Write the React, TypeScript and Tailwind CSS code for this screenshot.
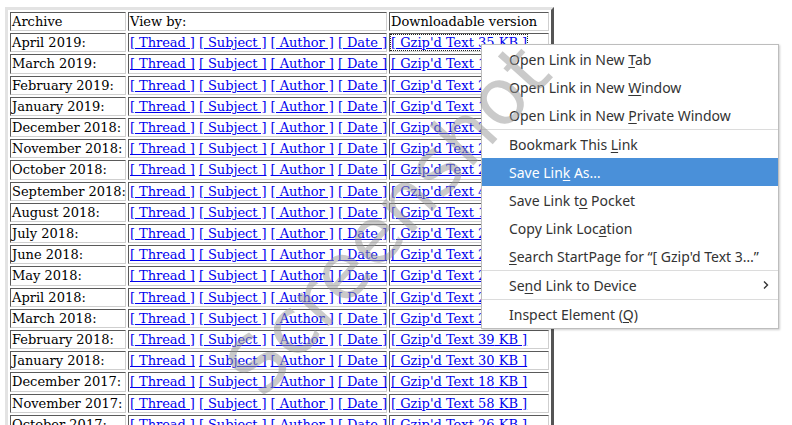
import React from "react";

const rows: [string, string][] = [
  ["April 2019:", "35"],
  ["March 2019:", "19"],
  ["February 2019:", "24"],
  ["January 2019:", "17"],
  ["December 2018:", "21"],
  ["November 2018:", "26"],
  ["October 2018:", "22"],
  ["September 2018:", "41"],
  ["August 2018:", "18"],
  ["July 2018:", "27"],
  ["June 2018:", "25"],
  ["May 2018:", "23"],
  ["April 2018:", "29"],
  ["March 2018:", "28"],
  ["February 2018:", "39"],
  ["January 2018:", "30"],
  ["December 2017:", "18"],
  ["November 2017:", "58"],
  ["October 2017:", "26"],
];

const cell =
  "border border-solid border-t-[#5a5a5a] border-l-[#5a5a5a] border-r-[#cfcfcf] border-b-[#cfcfcf] p-[1px] text-left font-normal align-middle whitespace-nowrap overflow-visible";

function L({ children, focus }: { children: React.ReactNode; focus?: boolean }) {
  return (
    <a
      href="#"
      className={
        focus
          ? "text-[#0000ee] underline outline-1 outline-dotted outline-[#222]"
          : "text-[#0000ee] underline"
      }
    >
      {children}
    </a>
  );
}

function U({ children }: { children: React.ReactNode }) {
  return <span className="underline underline-offset-2">{children}</span>;
}

function Item({
  children,
  active,
  arrow,
}: {
  children: React.ReactNode;
  active?: boolean;
  arrow?: boolean;
}) {
  return (
    <div
      className={
        active
          ? "h-[28px] flex items-center pl-[27px] pr-[10px] bg-[#4a90d9] text-white"
          : "h-[28px] flex items-center pl-[27px] pr-[10px] text-[#333333]"
      }
    >
      <span className="flex-1">{children}</span>
      {arrow && (
        <svg width="8" height="10" viewBox="0 0 8 10" className="mr-[-2px]">
          <path d="M2 1.5 L5.5 5 L2 8.5" fill="none" stroke="#333" strokeWidth="1.4" />
        </svg>
      )}
    </div>
  );
}

function Sep() {
  return <div className="h-px bg-[#dcdcdc]" />;
}

export default function App() {
  return (
    <div className="relative w-[792px] h-[425px] overflow-hidden bg-white">
      <div className="pl-[5px] pt-[7px]">
        <table
          className="table-fixed w-[549px] border-[3px] border-solid border-t-[#e3e3e3] border-l-[#e3e3e3] border-r-[#555] border-b-[#555] border-separate border-spacing-[2px] text-[13px] leading-[15.2px] text-black"
          style={{ fontFamily: '"DejaVu Serif", serif' }}
        >
          <colgroup>
            <col className="w-[116px]" />
            <col className="w-[259px]" />
            <col className="w-[160px]" />
          </colgroup>
          <tbody>
            <tr>
              <td className={cell}>Archive</td>
              <td className={cell}>View by:</td>
              <td className={cell}>Downloadable version</td>
            </tr>
            {rows.map(([m, kb], i) => (
              <tr key={i}>
                <td className={cell}>{m}</td>
                <td className={cell + " tracking-[-0.06px]"}>
                  <L>[ Thread ]</L> <L>[ Subject ]</L> <L>[ Author ]</L> <L>[ Date ]</L>
                </td>
                <td className={cell}>
                  <L focus={i === 0}>[ Gzip'd Text {kb} KB ]</L>
                </td>
              </tr>
            ))}
          </tbody>
        </table>
      </div>

      {/* watermark */}
      <div
        className="absolute left-[388px] top-[220px] pointer-events-none z-20"
        style={{ transform: "translate(-50%, -50%) rotate(-48deg)" }}
      >
        <div
          className="text-[78px] leading-none text-[rgba(150,150,150,0.5)] whitespace-nowrap"
          style={{ fontFamily: '"DejaVu Sans", sans-serif' }}
        >
          Screenshot
        </div>
      </div>

      {/* context menu */}
      <div
        className="absolute left-[481px] top-[44px] w-[298px] bg-white border border-solid border-[#bdbdbd] shadow-[1px_1px_2px_rgba(0,0,0,0.2)] text-[14px] z-10"
        style={{ fontFamily: '"Noto Sans", sans-serif' }}
      >
        <Item>
          Open Link in New <U>T</U>ab
        </Item>
        <Item>
          Open Link in New <U>W</U>indow
        </Item>
        <Item>
          Open Link in New <U>P</U>rivate Window
        </Item>
        <Sep />
        <Item>
          Bookmark This <U>L</U>ink
        </Item>
        <Item active>
          Save Lin<U>k</U> As…
        </Item>
        <Item>
          Save Link t<U>o</U> Pocket
        </Item>
        <Item>
          Copy Link Loc<U>a</U>tion
        </Item>
        <Item>
          <U>S</U>earch StartPage for “[ Gzip'd Text 3…”
        </Item>
        <Sep />
        <Item arrow>
          Se<U>n</U>d Link to Device
        </Item>
        <Sep />
        <Item>
          Inspect Element (<U>Q</U>)
        </Item>
      </div>
    </div>
  );
}
